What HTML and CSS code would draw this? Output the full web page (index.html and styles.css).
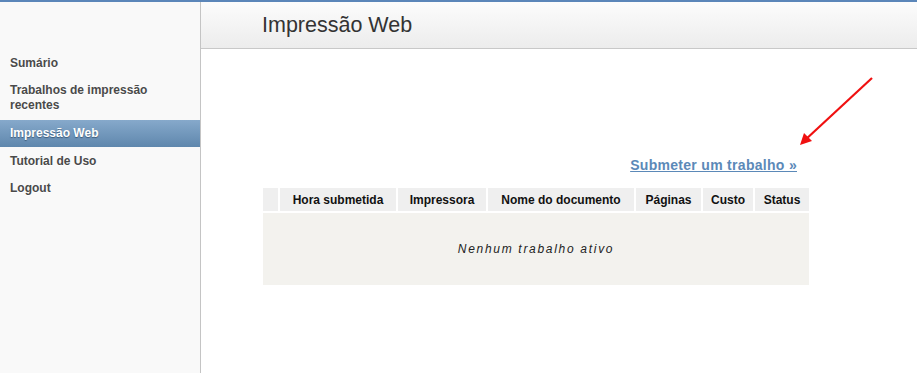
FILE: index.html
```html
<!DOCTYPE html>
<html lang="pt">
<head>
    <meta charset="UTF-8">
    <title>Impressão Web</title>
    <link rel="stylesheet" href="styles.css">
</head>
<body>
    <div class="layout">
        <div class="sidebar">
            <a class="nav-item" href="#">Sumário</a>
            <a class="nav-item" href="#">Trabalhos de impressão recentes</a>
            <a class="nav-item active" href="#">Impressão Web</a>
            <a class="nav-item" href="#">Tutorial de Uso</a>
            <a class="nav-item" href="#">Logout</a>
        </div>

        <div class="main">
            <div class="page-header">
                <h1>Impressão Web</h1>
            </div>

            <div class="content">
                <div class="submit-row">
                    <a class="submit-link" href="#">Submeter um trabalho »</a>
                </div>

                <table class="jobs">
                    <tr>
                        <th class="c-sel"></th>
                        <th class="c-time">Hora submetida</th>
                        <th class="c-printer">Impressora</th>
                        <th class="c-doc">Nome do documento</th>
                        <th class="c-pages">Páginas</th>
                        <th class="c-cost">Custo</th>
                        <th class="c-status">Status</th>
                    </tr>
                    <tr>
                        <td class="empty" colspan="7">Nenhum trabalho ativo</td>
                    </tr>
                </table>

                <!-- annotation arrow pointing at the link -->
                <svg class="arrow" width="90" height="80" viewBox="0 0 90 80">
                    <line x1="82" y1="5" x2="14" y2="68" stroke="#f01010" stroke-width="2.2"/>
                    <polygon points="10,72 14,60 22,68" fill="#f01010"/>
                </svg>
            </div>
        </div>
    </div>
</body>
</html>
```

FILE: styles.css
```css
body {
    margin: 0;
    border-top: 2px solid #5b86b9;
    font-family: "Liberation Sans", Arial, sans-serif;
    background: #fff;
}
.layout {
    display: flex;
    height: 371px;
}
.sidebar {
    flex-shrink: 0;
    width: 201px;
    box-sizing: border-box;
    background: #f9f9f9;
    border-right: 1px solid #c4c4c4;
    padding-top: 48px;
}
.nav-item {
    display: block;
    padding: 6px 10px;
    line-height: 15px;
    font-size: 12px;
    font-weight: bold;
    color: #4a4a4a;
    text-decoration: none;
    text-shadow: 0 1px 0 #fff;
}
.nav-item.active {
    color: #fff;
    background: linear-gradient(to bottom, #86a9cb, #5f87ad);
    text-shadow: 0 1px 1px #3c5a78;
    margin-top: 1px;
    margin-bottom: 1px;
}
.main {
    flex: 1;
    position: relative;
}
.page-header {
    height: 46px;
    background: linear-gradient(to bottom, #fcfcfc, #ececec);
    border-bottom: 1px solid #c8c8c8;
    padding-left: 61px;
    display: flex;
    align-items: center;
}
.page-header h1 {
    margin: 0;
    font-size: 21.5px;
    font-weight: normal;
    color: #333;
}
.content {
    padding: 107px 0 0 60px;
}
.submit-row {
    width: 536px;
    padding-right: 14px;
    text-align: right;
    padding-bottom: 12px;
}
.submit-link {
    font-size: 14px;
    font-weight: bold;
    color: #5b89b8;
    letter-spacing: 0.3px;
    text-decoration: underline;
}
.jobs {
    border-spacing: 2px;
    font-size: 12px;
}
.jobs th {
    background: #efefef;
    height: 23px;
    padding: 0;
    color: #111;
    font-weight: bold;
    text-align: center;
}
.c-sel { width: 15px; }
.c-time { width: 116px; }
.c-printer { width: 88px; }
.c-doc { width: 146px; }
.c-pages { width: 65px; }
.c-cost { width: 50px; }
.c-status { width: 54px; }
.jobs td.empty {
    background: #f3f2ee;
    height: 72px;
    padding: 0;
    text-align: center;
    font-style: italic;
    letter-spacing: 1.7px;
    color: #222;
}
.arrow {
    position: absolute;
    left: 589px;
    top: 71px;
}
```
